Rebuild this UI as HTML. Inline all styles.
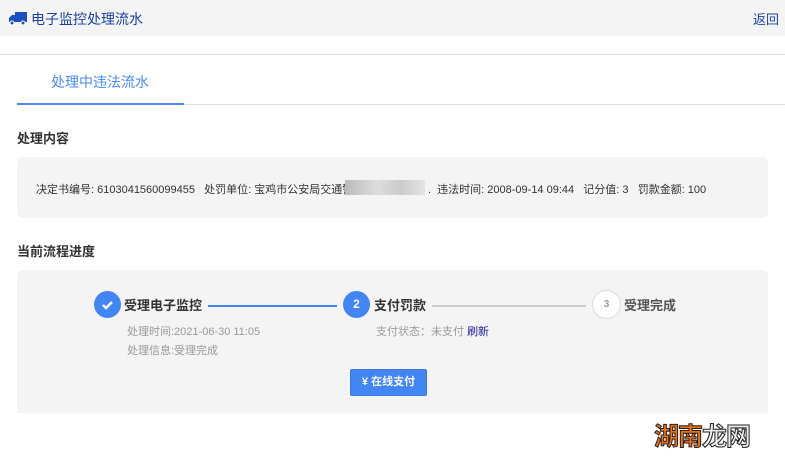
<!DOCTYPE html>
<html><head><meta charset="utf-8"><style>
body{margin:0;width:785px;height:459px;background:#fff;font-family:"Liberation Sans","Noto Sans CJK SC",sans-serif;position:relative;overflow:hidden}
.a{position:absolute;white-space:nowrap}
</style></head><body>
<div class="a" style="left:0;top:0;width:785px;height:36px;background:#f4f4f4"></div>
<svg class="a" style="left:8px;top:10px" width="19" height="16" viewBox="0 0 19 16"><path d="M7 2h12v10H7z M7 5H4L1 8v4h6z" fill="#1a4fc4"/><circle cx="4" cy="13" r="2" fill="#1a4fc4" stroke="#fff"/><circle cx="15" cy="13" r="2" fill="#1a4fc4" stroke="#fff"/></svg>
<div class="a" style="left:31px;top:9px;font-size:14px;color:#1a3fa8">电子监控处理流水</div>
<div class="a" style="left:753px;top:9px;font-size:13px;color:#1a3fa8">返回</div>
<div class="a" style="left:0;top:54px;width:785px;height:1px;background:#ddd"></div>
<div class="a" style="left:51px;top:72px;font-size:14px;color:#4a8af4">处理中违法流水</div>
<div class="a" style="left:17px;top:104px;width:768px;height:1px;background:#ddd"></div>
<div class="a" style="left:17px;top:103px;width:167px;height:2px;background:#4a8af4"></div>
<div class="a" style="left:17px;top:128px;font-size:13px;font-weight:bold;color:#333">处理内容</div>
<div class="a" style="left:17px;top:157px;width:751px;height:61px;background:#f4f4f4;border-radius:6px"></div>
<div class="a" style="left:36px;top:181px;font-size:11px;color:#333">决定书编号: 6103041560099455 &nbsp; 处罚单位: 宝鸡市公安局交通警</div>
<div class="a" style="left:345px;top:180px;width:80px;height:15px;background:linear-gradient(90deg,#bbb,#ddd 40%,#ccc 70%,#e4e4e4)"></div>
<div class="a" style="left:428px;top:181px;font-size:11px;color:#333">. &nbsp;违法时间: 2008-09-14 09:44 &nbsp; 记分值: 3 &nbsp; 罚款金额: 100</div>
<div class="a" style="left:17px;top:241px;font-size:13px;font-weight:bold;color:#333">当前流程进度</div>
<div class="a" style="left:17px;top:270px;width:751px;height:143px;background:#f4f4f4;border-radius:6px 6px 0 0"></div>
<div class="a" style="left:94px;top:291px;width:27px;height:27px;border-radius:50%;background:#4285f4"></div>
<svg class="a" style="left:100px;top:297px" width="15" height="15"><path d="M3 8l3 3 6-6" stroke="#fff" stroke-width="2.5" fill="none"/></svg>
<div class="a" style="left:124px;top:295px;font-size:13px;font-weight:bold;color:#333">受理电子监控</div>
<div class="a" style="left:208px;top:305px;width:129px;height:2px;background:#4285f4"></div>
<div class="a" style="left:343px;top:291px;width:27px;height:27px;border-radius:50%;background:#4285f4;color:#fff;font-size:12px;font-weight:bold;text-align:center;line-height:27px">2</div>
<div class="a" style="left:374px;top:295px;font-size:13px;font-weight:bold;color:#333">支付罚款</div>
<div class="a" style="left:432px;top:305px;width:154px;height:2px;background:#ccc"></div>
<div class="a" style="left:592px;top:290px;width:27px;height:27px;border-radius:50%;background:#fff;border:1px solid #ddd;color:#999;font-size:10px;font-weight:bold;text-align:center;line-height:27px">3</div>
<div class="a" style="left:624px;top:295px;font-size:13px;font-weight:bold;color:#555">受理完成</div>
<div class="a" style="left:127px;top:323px;font-size:11px;color:#999">处理时间:2021-06-30 11:05</div>
<div class="a" style="left:127px;top:342px;font-size:11px;color:#999">处理信息:受理完成</div>
<div class="a" style="left:376px;top:323px;font-size:11px;color:#999">支付状态：未支付 <span style="color:#1a1aa0">刷新</span></div>
<div class="a" style="left:350px;top:369px;width:75px;height:25px;background:#4285f4;border:1px solid #3b78e0;border-radius:2px;color:#fff;font-size:11px;font-weight:bold;text-align:center;line-height:25px">¥ 在线支付</div>
<div class="a" style="left:654px;top:417px;font-size:25px;font-weight:bold;-webkit-text-stroke:1px #222;letter-spacing:-1px"><span style="color:#f07010">湖南</span><span style="color:#eee">龙网</span></div>
</body></html>
